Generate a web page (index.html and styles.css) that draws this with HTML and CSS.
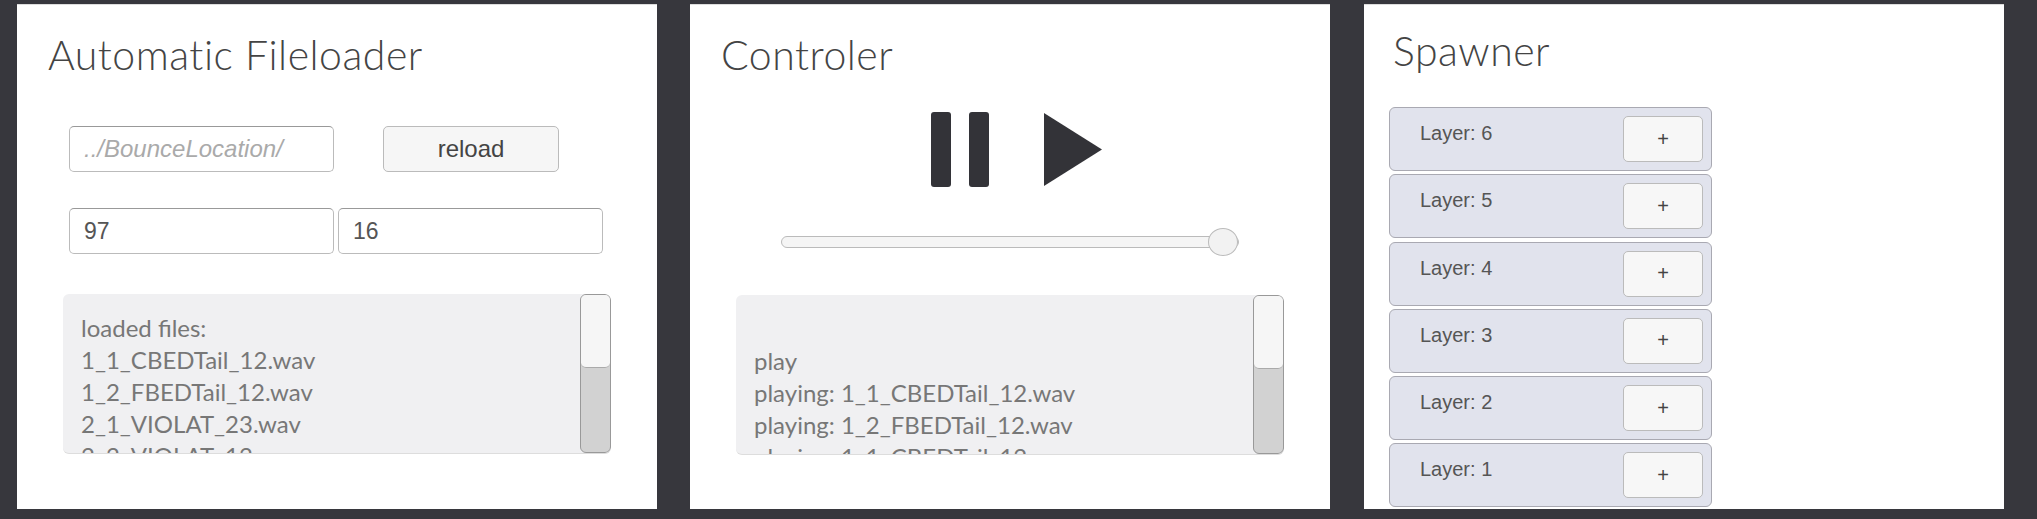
FILE: index.html
```html
<!DOCTYPE html>
<html lang="en">
<head>
  <meta charset="utf-8">
  <title>Audio Layers</title>
  <link rel="stylesheet" href="styles.css">
</head>
<body>
  <section class="panel">
    <h2 class="title">Automatic Fileloader</h2>
    <div class="loader-row">
      <input class="field" type="text" placeholder="../BounceLocation/">
      <button class="reload-btn">reload</button>
    </div>
    <div class="size-row">
      <input class="field" type="text" value="97">
      <input class="field" type="text" value="16">
    </div>
    <div class="log">
      <div class="log-text">
        <p>loaded files:</p>
        <p>1_1_CBEDTail_12.wav</p>
        <p>1_2_FBEDTail_12.wav</p>
        <p>2_1_VIOLAT_23.wav</p>
        <p>2_2_VIOLAT_12.wav</p>
      </div>
      <div class="scrollbar"><div class="thumb"></div></div>
    </div>
  </section>

  <section class="panel">
    <h2 class="title">Controler</h2>
    <div class="transport">
      <svg class="pause-icon" width="58" height="75" viewBox="0 0 58 75">
        <rect x="0" y="0" width="20" height="75" rx="3"/>
        <rect x="38" y="0" width="20" height="75" rx="3"/>
      </svg>
      <svg class="play-icon" width="58" height="73" viewBox="0 0 58 73">
        <path d="M0 0 L58 36.5 L0 73 Z"/>
      </svg>
    </div>
    <input class="volume" type="range" min="0" max="100" value="100">
    <div class="log log-player">
      <div class="log-text">
        <p>&nbsp;</p>
        <p>play</p>
        <p>playing: 1_1_CBEDTail_12.wav</p>
        <p>playing: 1_2_FBEDTail_12.wav</p>
        <p>playing: 1_1_CBEDTail_12.wav</p>
      </div>
      <div class="scrollbar"><div class="thumb"></div></div>
    </div>
  </section>

  <section class="panel spawner">
    <h2 class="title">Spawner</h2>
    <div class="layers">
      <div class="layer"><span class="layer-name">Layer: 6</span><button class="add-btn">+</button></div>
      <div class="layer"><span class="layer-name">Layer: 5</span><button class="add-btn">+</button></div>
      <div class="layer"><span class="layer-name">Layer: 4</span><button class="add-btn">+</button></div>
      <div class="layer"><span class="layer-name">Layer: 3</span><button class="add-btn">+</button></div>
      <div class="layer"><span class="layer-name">Layer: 2</span><button class="add-btn">+</button></div>
      <div class="layer"><span class="layer-name">Layer: 1</span><button class="add-btn">+</button></div>
    </div>
  </section>
</body>
</html>
```

FILE: styles.css
```css
html, body {
  height: 100%;
}

body {
  margin: 0;
  padding: 4px 0 0 17px;
  box-sizing: border-box;
  display: flex;
  gap: 33px;
  background-color: #37373d;
  overflow: hidden;
  font-family: "Liberation Sans", Arial, sans-serif;
}

.panel {
  flex: none;
  width: 640px;
  height: 505px;
  box-sizing: border-box;
  padding-top: 26px;
  background-color: #fff;
  border-top: 1px solid #ddd;
}

.title {
  margin: 0 0 0 31px;
  font-family: Lato, sans-serif;
  font-size: 41px;
  font-weight: 300;
  letter-spacing: 0.5px;
  line-height: 48px;
  color: #444;
}

.field {
  width: 265px;
  height: 46px;
  box-sizing: border-box;
  margin: 0;
  padding: 1px 14px 0;
  font-family: "Liberation Sans", Arial, sans-serif;
  font-size: 23px;
  color: #555;
  background: #fff;
  border: 1px solid #bbb;
  border-top-color: #999;
  border-radius: 5px;
}

.field::placeholder {
  font-size: 24px;
  font-style: italic;
  color: #aaa;
}

.loader-row {
  display: flex;
  gap: 49px;
  margin: 47px 0 0 52px;
}

.size-row {
  display: flex;
  gap: 4px;
  margin: 36px 0 0 52px;
}

.reload-btn {
  width: 176px;
  height: 46px;
  padding: 0;
  font-family: "Liberation Sans", Arial, sans-serif;
  font-size: 24px;
  color: #444;
  background: #f6f6f6;
  border: 1px solid #bbb;
  border-radius: 5px;
}

.log {
  display: flex;
  width: 548px;
  height: 160px;
  margin: 40px 0 0 46px;
  background: #f0f0f2;
  border-radius: 6px;
  border-bottom: 1px solid #ddd;
  overflow: hidden;
  box-sizing: border-box;
}

.log-player {
  margin-top: 47px;
}

.log-text {
  flex: 1;
  padding: 18px 0 0 18px;
  font-family: Lato, sans-serif;
  font-size: 24px;
  line-height: 32px;
  color: #777;
}

.log-text p {
  margin: 0;
}

.scrollbar {
  width: 31px;
  background: #d2d2d2;
  border: 1px solid #999;
  border-radius: 6px;
  box-sizing: border-box;
}

.thumb {
  height: 72px;
  background: #f6f6f6;
  border-bottom: 1px solid #aaa;
  border-radius: 5px;
}

.transport {
  display: flex;
  align-items: center;
  gap: 55px;
  margin: 33px 0 0 241px;
}

.transport svg {
  fill: #333338;
}

.volume {
  appearance: none;
  display: block;
  width: 458px;
  height: 12px;
  margin: 49px 0 0 91px;
  background: #f5f5f5;
  border: 1px solid #bbb;
  border-radius: 6px;
  box-sizing: border-box;
}

.volume::-webkit-slider-thumb {
  appearance: none;
  width: 30px;
  height: 28px;
  background: #f2f2f2;
  border: 1px solid #bbb;
  border-radius: 50%;
}

.spawner {
  margin-left: 1px;
  padding-top: 22px;
}

.spawner .title {
  margin-left: 29px;
}

.layers {
  display: flex;
  flex-direction: column;
  gap: 3.3px;
  width: 323px;
  margin: 32px 0 0 25px;
}

.layer {
  display: flex;
  justify-content: space-between;
  align-items: flex-start;
  height: 64px;
  box-sizing: border-box;
  padding: 8px 8px 0 30px;
  background: #e1e3ed;
  border: 1px solid #a9a9b2;
  border-radius: 6px;
}

.layer-name {
  margin-top: 6px;
  font-size: 20px;
  color: #555;
}

.add-btn {
  width: 80px;
  height: 46px;
  padding: 0;
  font-family: "Liberation Sans", Arial, sans-serif;
  font-size: 20px;
  color: #444;
  background: #f7f7f7;
  border: 1px solid #bbb;
  border-radius: 5px;
}
```
